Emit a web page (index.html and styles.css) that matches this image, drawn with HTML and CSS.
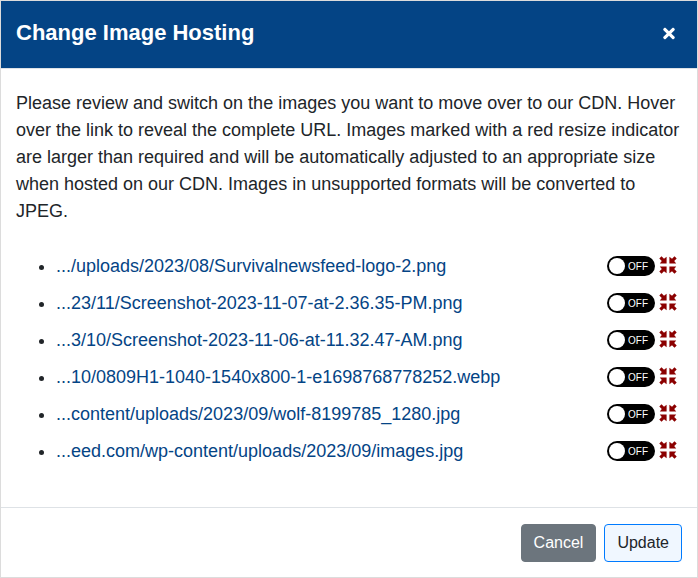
FILE: index.html
```html
<!DOCTYPE html>
<html lang="en">
<head>
<meta charset="utf-8">
<title>Change Image Hosting</title>
<link rel="stylesheet" href="styles.css">
</head>
<body>
<svg width="0" height="0" class="sprite" aria-hidden="true">
  <symbol id="compress" viewBox="0 0 18 18"><path d="M.3 2.5 2.5.3 5 2.8 7.6.8V7.6H.8L2.8 5ZM17.7 2.5 15.5.3 13 2.8 10.4.8V7.6H17.2L15.2 5ZM.3 15.5 2.5 17.7 5 15.2 7.6 17.2V10.4H.8L2.8 13ZM17.7 15.5 15.5 17.7 13 15.2 10.4 17.2V10.4H17.2L15.2 13Z"/></symbol>
</svg>
<div class="modal">
  <header class="modal-header">
    <h1 class="title">Change Image Hosting</h1>
    <button class="close" aria-label="Close"><svg viewBox="0 0 352 512"><path d="M242.72 256l100.07-100.07c12.28-12.28 12.28-32.19 0-44.48l-22.24-22.24c-12.28-12.28-32.19-12.28-44.48 0L176 189.28 75.93 89.21c-12.28-12.28-32.19-12.28-44.48 0L9.21 111.45c-12.28 12.28-12.28 32.19 0 44.48L109.28 256 9.21 356.07c-12.28 12.28-12.28 32.19 0 44.48l22.24 22.24c12.28 12.28 32.2 12.28 44.48 0L176 322.72l100.07 100.07c12.28 12.28 32.2 12.28 44.48 0l22.24-22.24c12.28-12.28 12.28-32.19 0-44.48L242.72 256z"/></svg></button>
  </header>
  <main class="modal-body">
    <p class="intro">Please review and switch on the images you want to move over to our CDN. Hover over the link to reveal the complete URL. Images marked with a red resize indicator are larger than required and will be automatically adjusted to an appropriate size when hosted on our CDN. Images in unsupported formats will be converted to JPEG.</p>
    <ul class="images">
      <li><div class="row"><a href="#">.../uploads/2023/08/Survivalnewsfeed-logo-2.png</a><span class="toggle"><span class="knob"></span><span class="state">OFF</span></span><svg class="resize"><use href="#compress"/></svg></div></li>
      <li><div class="row"><a href="#">...23/11/Screenshot-2023-11-07-at-2.36.35-PM.png</a><span class="toggle"><span class="knob"></span><span class="state">OFF</span></span><svg class="resize"><use href="#compress"/></svg></div></li>
      <li><div class="row"><a href="#">...3/10/Screenshot-2023-11-06-at-11.32.47-AM.png</a><span class="toggle"><span class="knob"></span><span class="state">OFF</span></span><svg class="resize"><use href="#compress"/></svg></div></li>
      <li><div class="row"><a href="#">...10/0809H1-1040-1540x800-1-e1698768778252.webp</a><span class="toggle"><span class="knob"></span><span class="state">OFF</span></span><svg class="resize"><use href="#compress"/></svg></div></li>
      <li><div class="row"><a href="#">...content/uploads/2023/09/wolf-8199785_1280.jpg</a><span class="toggle"><span class="knob"></span><span class="state">OFF</span></span><svg class="resize"><use href="#compress"/></svg></div></li>
      <li><div class="row"><a href="#">...eed.com/wp-content/uploads/2023/09/images.jpg</a><span class="toggle"><span class="knob"></span><span class="state">OFF</span></span><svg class="resize"><use href="#compress"/></svg></div></li>
    </ul>
  </main>
  <footer class="modal-footer">
    <button class="btn cancel">Cancel</button>
    <button class="btn update">Update</button>
  </footer>
</div>
</body>
</html>
```
FILE: styles.css
```css
* { box-sizing: border-box; }
body {
  margin: 0;
  font: 18px/27px "Liberation Sans", Arial, sans-serif;
  color: #212529;
  background: #fff;
}
.sprite { display: none; }
.modal {
  display: flex;
  flex-direction: column;
  width: 698px;
  height: 578px;
  border: 1px solid #dcdcdc;
}
.modal-header {
  display: flex;
  justify-content: space-between;
  height: 68px;
  padding: 16px 22px 0 15px;
  color: #fff;
  background: #044485;
  border-bottom: 1px solid #dee2e6;
}
.title {
  margin: 0;
  font-size: 22px;
  line-height: 32px;
  font-weight: 700;
}
.close {
  width: 12px;
  height: 32px;
  padding: 0;
  border: 0;
  background: none;
}
.close svg { display: block; width: 12px; height: 17px; fill: #fff; }
.modal-body { flex: 1; padding: 21px 15px 0; }
.intro { margin: 0; }
.images { margin: 28px 0 0; padding: 0 0 0 40px; }
.images li { margin-bottom: 10px; }
.row { display: flex; align-items: flex-start; height: 27px; }
.row a { flex: 1; color: #044485; text-decoration: none; }
.toggle {
  display: flex;
  align-items: center;
  gap: 3px;
  width: 48px;
  height: 20px;
  margin-top: 3px;
  padding: 0 2px;
  border-radius: 10px;
  color: #fff;
  background: #000;
}
.state { padding-top: 2px; font-size: 10px; line-height: 18px; }
.knob { width: 16px; height: 16px; border-radius: 50%; background: #fff; }
.resize { width: 18px; height: 18px; margin: 3px 5px 0 4px; fill: #8b0000; }
.modal-footer {
  display: flex;
  justify-content: flex-end;
  gap: 8px;
  height: 70px;
  padding: 16px 15px;
  border-top: 1px solid #dee2e6;
}
.btn {
  height: 38px;
  padding: 0 12px;
  border: 1px solid;
  border-radius: 4px;
  font: 16px/24px "Liberation Sans", Arial, sans-serif;
}
.cancel { color: #fff; background: #6c757d; border-color: #6c757d; }
.update { color: #212529; background: #f0f7ff; border-color: #007bff; }
```
